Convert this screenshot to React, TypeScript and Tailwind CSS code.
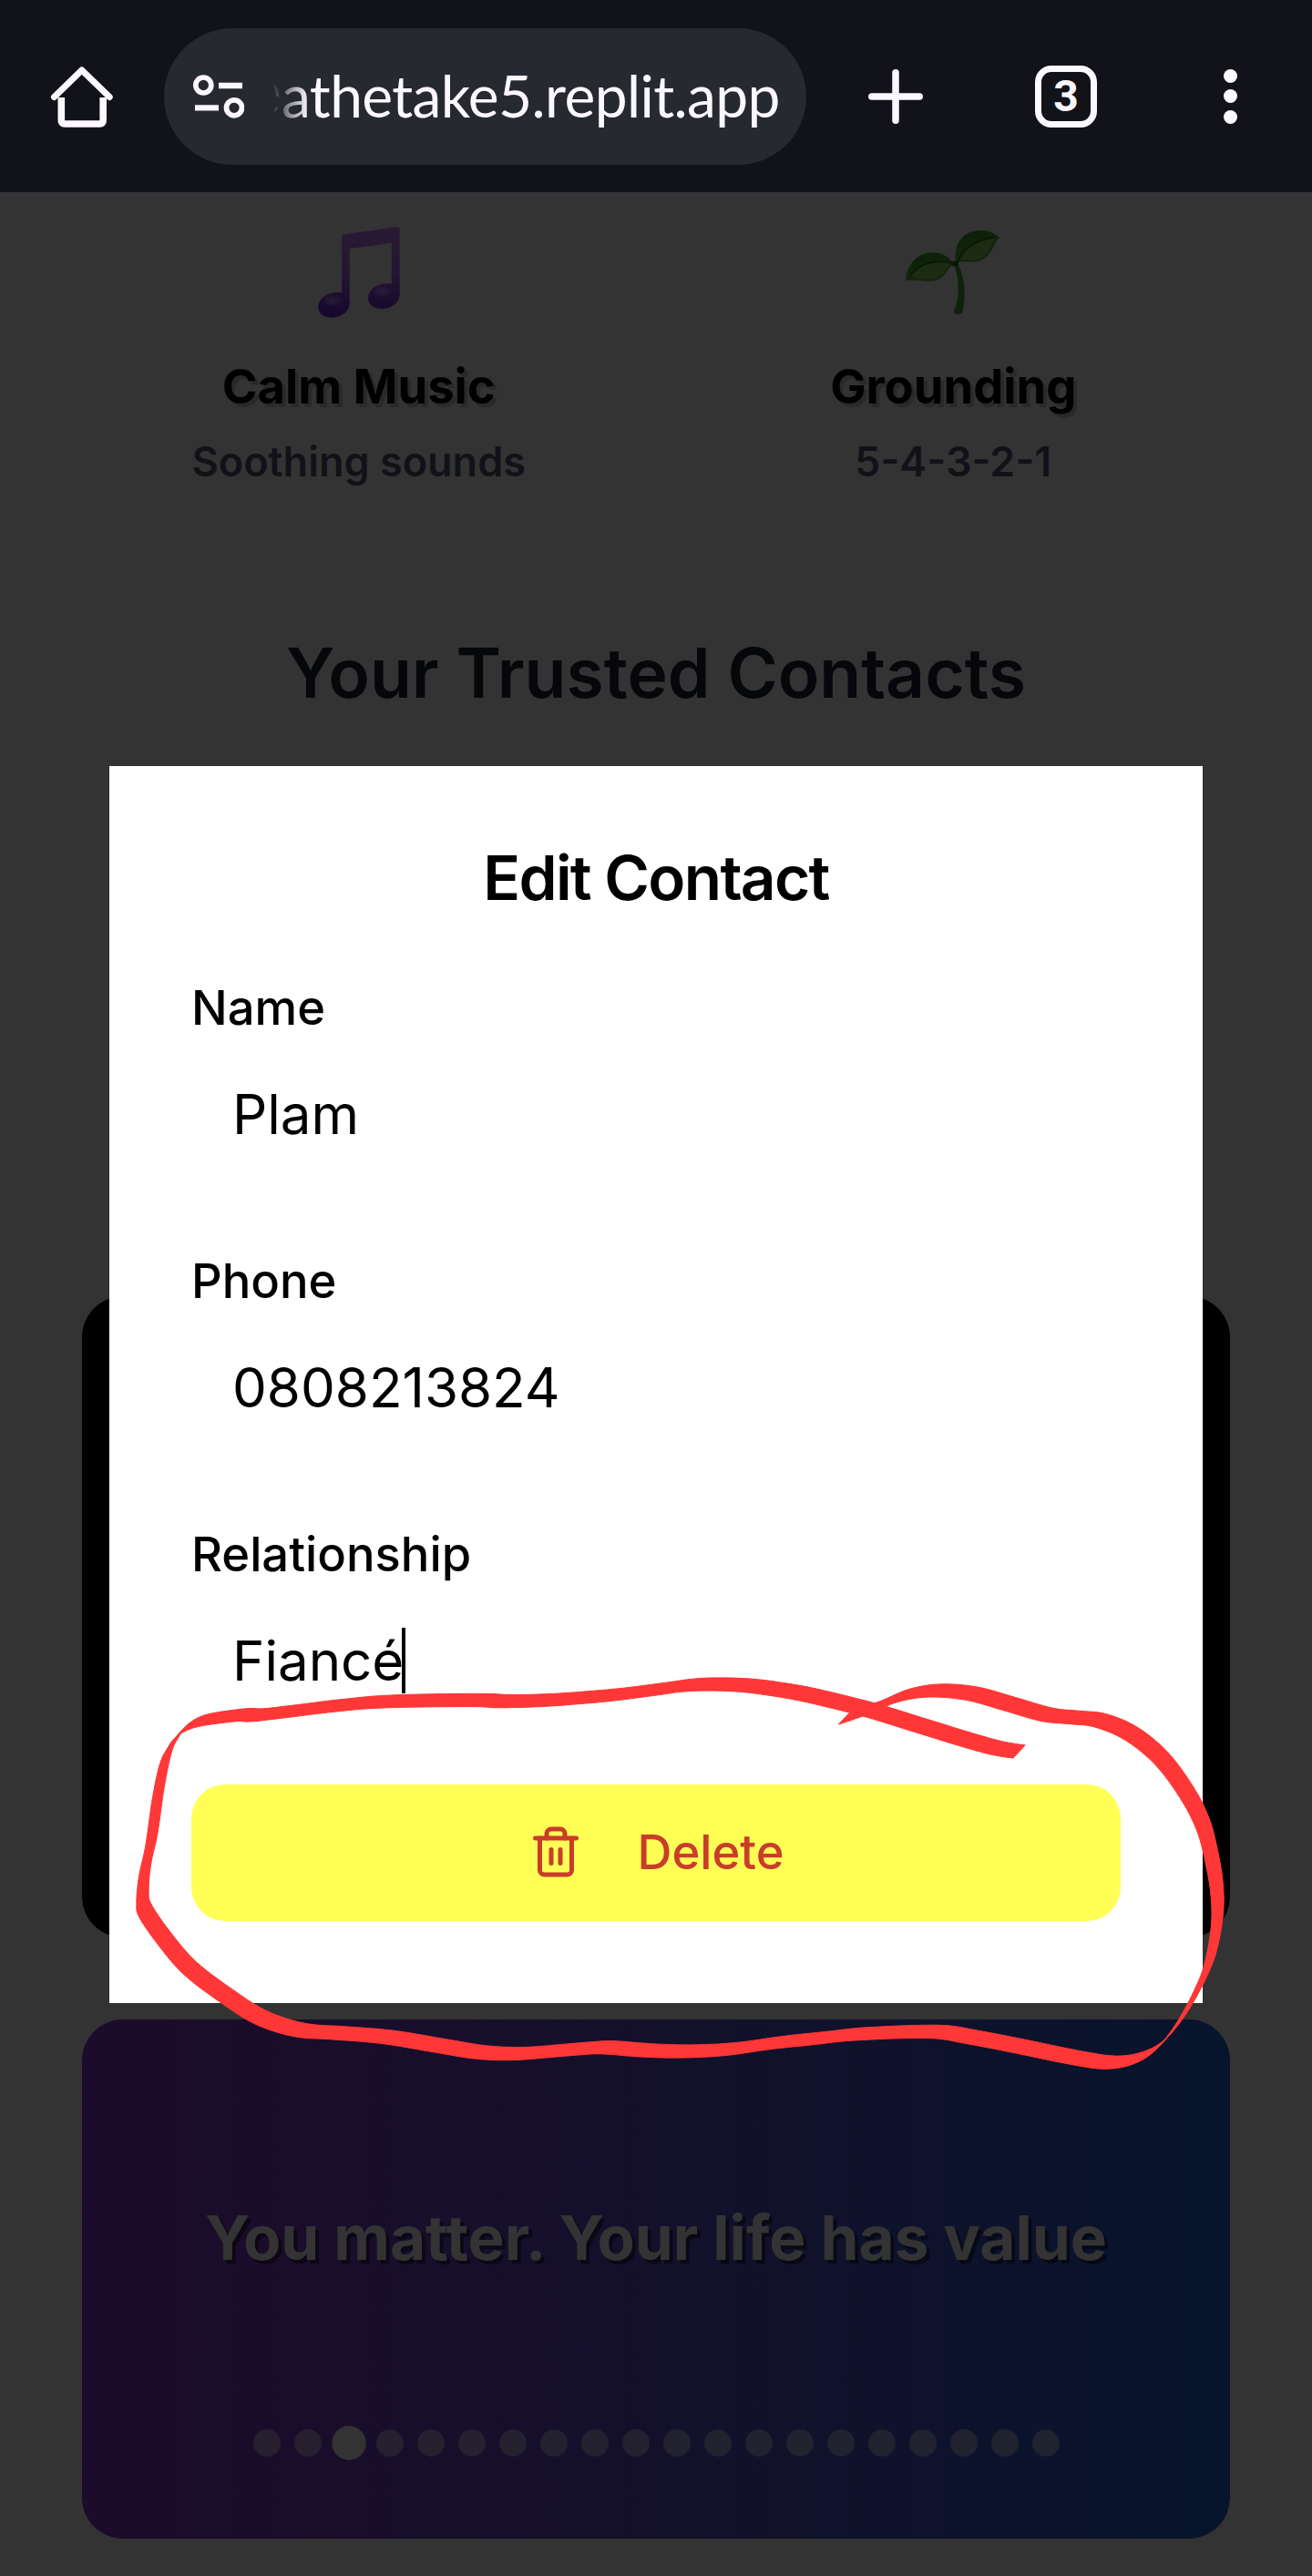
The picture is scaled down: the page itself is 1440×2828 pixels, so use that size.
import type { ReactNode } from "react";

type Point = [number, number];

const INK = "#fcf8ff";

/* ---------- browser bar ---------- */

function BarIcon({ children, className }: { children: ReactNode; className: string }) {
  return (
    <svg viewBox="0 0 90 90" fill="none" stroke={INK} className={`size-[90px] shrink-0 ${className}`}>
      {children}
    </svg>
  );
}

function BrowserBar() {
  return (
    <header className="flex h-[211px] items-center bg-[#121318]">
      <BarIcon className="ml-[45px]">
        <path d="M22.300 46V71.200a3.500 3.500 0 0 0 3.500 3.800H64.700a3.500 3.500 0 0 0 3.500-3.800V46" strokeWidth="7.600" />
        <path d="M14.500 45.500L44.800 16L75.200 45.500" strokeWidth="7" strokeLinecap="round" strokeLinejoin="round" />
      </BarIcon>

      <div className="ml-[45px] flex h-[150px] w-[705px] items-center rounded-full bg-[#272931]">
        <svg viewBox="0 0 56 48" fill="none" stroke={INK} strokeWidth="5.700" className="ml-8 h-12 w-14 shrink-0">
          <circle cx="11.300" cy="11.500" r="8.500" />
          <path d="M28 12H54M2 36.300H28" strokeWidth="6.300" />
          <circle cx="45" cy="36.300" r="8.500" />
        </svg>
        <div className="ml-8 flex w-[580px] items-center [mask-image:linear-gradient(to_right,rgba(0,0,0,0.05)_0px,rgba(0,0,0,0.35)_12px,black_38px)]">
          <svg viewBox="0 0 6 34" fill="none" stroke={INK} strokeWidth="3" className="mr-[3px] mt-1 h-[34px] w-[6px] shrink-0">
            <path d="M1 3Q4.500 8 4.500 15M1 31L4 27" />
          </svg>
          <span className="-mt-[2px] whitespace-nowrap font-['Lato',sans-serif] text-[64px] leading-[80px] tracking-[-0.6px] text-[#fcf8ff]">
            athetake5.replit.app
          </span>
        </div>
      </div>

      <BarIcon className="ml-[53px]">
        <path d="M45 18.800V71.200M18.800 45H71.200" strokeWidth="7.500" strokeLinecap="round" />
      </BarIcon>

      <div className="ml-[97px] flex size-[90px] items-center justify-center">
        <div className="flex size-[68px] items-center justify-center rounded-[18px] border-[7.5px] border-[#fcf8ff]">
          <span className="font-['Roboto',sans-serif] text-[48px] font-bold leading-none text-[#fcf8ff]">3</span>
        </div>
      </div>

      <div className="ml-[90px] flex w-[90px] flex-col items-center gap-[7.5px]">
        <i className="size-[15px] rounded-full bg-[#fcf8ff]" />
        <i className="size-[15px] rounded-full bg-[#fcf8ff]" />
        <i className="size-[15px] rounded-full bg-[#fcf8ff]" />
      </div>
    </header>
  );
}

/* ---------- dimmed page ---------- */

function MusicNote() {
  return (
    <svg viewBox="490 86 262 300" preserveAspectRatio="none" className="mt-[34px] h-[100px] w-[90px]">
      <defs>
        <linearGradient id="note" gradientUnits="userSpaceOnUse" x1="0" y1="86" x2="0" y2="386">
          <stop offset="0" stopColor="#291a34" />
          <stop offset="0.5" stopColor="#241533" />
          <stop offset="1" stopColor="#14072b" />
        </linearGradient>
        <radialGradient id="noteShine">
          <stop offset="0" stopColor="#2b1e3a" stopOpacity="0.9" />
          <stop offset="1" stopColor="#2b1e3a" stopOpacity="0" />
        </radialGradient>
      </defs>
      <g fill="url(#note)">
        <path d="M566 119Q566 112 573 111L740 87Q751 85 751 95V314H725V139L591 158V344H566Z" />
        <path d="M566 303C520 298 491 322 491 350C491 372 510 385 534 385C565 385 591 366 591 335L566 300Z" />
        <path d="M725 274C680 268 650 293 650 320C650 342 668 356 694 356C727 356 751 336 751 306L725 272Z" />
      </g>
      <ellipse cx="536" cy="330" rx="34" ry="20" fill="url(#noteShine)" />
      <ellipse cx="696" cy="300" rx="34" ry="20" fill="url(#noteShine)" />
    </svg>
  );
}

function Seedling() {
  return (
    <svg viewBox="405 98 312 277" className="mt-[38px] h-[92px] w-[104px]">
      <defs>
        <linearGradient id="leaf" x1="0" y1="0" x2="0.4" y2="1">
          <stop offset="0" stopColor="#0a1f09" />
          <stop offset="1" stopColor="#16260d" />
        </linearGradient>
      </defs>
      <path d="M564 208C578 250 588 312 564 364Q562 374 577 375Q591 375 593 366C603 312 603 262 577 208Z" fill="#0f210c" />
      <path d="M569 208C562 128 604 98 652 98C686 98 700 110 716 122C690 138 694 200 624 203C604 203 588 196 569 208Z" fill="url(#leaf)" />
      <path d="M566 208C545 184 526 171 495 171C443 171 404 214 406 266C424 258 440 266 482 266C540 266 536 222 566 208Z" fill="url(#leaf)" />
      <path d="M584 196C600 158 650 128 704 124C684 142 680 192 628 196C608 198 596 194 584 196Z" fill="#1d2b12" />
      <path d="M422 250C446 212 500 196 556 208C532 222 528 256 482 260C454 261 436 254 422 250Z" fill="#1d2b12" />
      <path d="M576 204C590 156 640 124 702 120M560 206C500 192 448 206 420 248" fill="none" stroke="#081a07" strokeWidth="5" />
      <circle cx="568" cy="208" r="10" fill="#071607" />
    </svg>
  );
}

function Feature({ icon, title, caption }: { icon: ReactNode; title: string; caption: string }) {
  return (
    <div className="flex flex-col items-center">
      <div className="h-[172px]">{icon}</div>
      <h3 className="text-[52.5px] font-bold leading-[75px] text-black [text-shadow:3.75px_3.75px_0_#292929]">{title}</h3>
      <p className="mt-[15px] text-[45px] font-semibold leading-[60px] text-[#111217]">{caption}</p>
    </div>
  );
}

function AffirmationCard() {
  return (
    <section className="mx-[90px] mt-[90px] flex h-[570px] flex-col items-center rounded-[45px] bg-linear-to-r from-[#1c0b2b] to-[#07142c] pt-[187px]">
      <p className="whitespace-nowrap text-[67.5px] font-bold leading-[105px] text-[#333333] [text-shadow:3.75px_3.75px_0_rgba(0,0,0,0.5)]">
        You matter. Your life has value
      </p>
      <div className="mt-[158px] flex gap-[15px]">
        {Array.from({ length: 20 }, (_, i) => (
          <i
            key={i}
            className={i === 2 ? "size-[30px] scale-125 rounded-full bg-[#333333]" : "size-[30px] rounded-full bg-[#333333]/50"}
          />
        ))}
      </div>
    </section>
  );
}

/* ---------- dialog ---------- */

function Field({ label, value, focused = false }: { label: string; value: string; focused?: boolean }) {
  return (
    <div className="h-[300px]">
      <div className="text-[52.5px] font-medium leading-[75px]">{label}</div>
      <div className="mt-[34px] flex h-[90px] items-center pl-[45px] text-[60px] leading-[90px]">
        {value}
        {focused && <span className="-ml-[2px] h-[72px] w-1 bg-black" />}
      </div>
    </div>
  );
}

function TrashIcon() {
  return (
    <svg viewBox="0 0 24 24" fill="none" stroke="currentColor" strokeWidth="2" strokeLinecap="round" strokeLinejoin="round" className="-mt-[2px] size-[60px]">
      <path d="M3 6h18" />
      <path d="M19 6v14a2 2 0 0 1-2 2H7a2 2 0 0 1-2-2V6" />
      <path d="M8 6V4a2 2 0 0 1 2-2h4a2 2 0 0 1 2 2v2" />
      <path d="M10 11v6M14 11v6" />
    </svg>
  );
}

function EditDialog() {
  return (
    <div className="absolute left-[120px] top-[841px] h-[1358px] w-[1200px] bg-white px-[90px] pt-[89px] text-black">
      <h2 className="text-center text-[67.5px] font-semibold leading-[68px] tracking-tight">Edit Contact</h2>
      <div className="mt-[71px] h-[890px]">
        <Field label="Name" value="Plam" />
        <Field label="Phone" value="0808213824" />
        <Field label="Relationship" value="Fiancé" focused />
      </div>
      <button className="flex h-[150px] w-full items-center justify-center gap-[60px] rounded-[37.5px] bg-[#ffff55] text-[52.5px] font-medium leading-[75px] text-[#c93d2b]">
        <TrashIcon />
        <span className="-mt-px">Delete</span>
      </button>
    </div>
  );
}

/* ---------- hand-drawn marker loop ---------- */

const LOOP: Point[] = [
  [1118.6, 1923], [1094, 1919], [1059.7, 1909.5], [1004.6, 1892.5], [955.7, 1877.5], [900, 1863.5],
  [866.7, 1856.7], [826.7, 1851], [790, 1849], [756.7, 1850], [726.7, 1854], [680, 1860], [640, 1863.7],
  [600, 1866.5], [554.5, 1867.7], [520, 1866.4], [424.4, 1868], [370, 1872.5], [325, 1878], [283, 1882.8],
  [263.7, 1882.8], [221.6, 1889], [201, 1899], [190, 1913], [181.8, 1930.4], [173.8, 1968], [166.5, 2018.8],
  [159.2, 2052.5], [156.5, 2082], [160, 2098.7], [183.3, 2132], [210, 2162], [248.4, 2191], [286.7, 2215],
  [328.8, 2228.5], [370.9, 2231.8], [424.4, 2236.2], [481.8, 2245.6], [527.8, 2253], [569.9, 2254.5],
  [615.8, 2251], [640, 2249], [666.7, 2247.7], [706.7, 2250.7], [750, 2252], [800, 2249.7], [853, 2242.5],
  [900, 2237.5], [946, 2232.8], [1025, 2230.4], [1066.6, 2236.3], [1125, 2247.6], [1176.8, 2258.3],
  [1218, 2264.2], [1249, 2259.3], [1273.2, 2245], [1295.6, 2217.3], [1316, 2181], [1328.7, 2148.5],
  [1336, 2107], [1335.5, 2072.7], [1329.7, 2038], [1320.7, 2003.8], [1303.5, 1969.4], [1275.3, 1931],
  [1242, 1903.5], [1207.8, 1888.8], [1180, 1885.5], [1149, 1882.3], [1108, 1870.6], [1066.6, 1859.2],
  [1025.3, 1856], [991, 1861.6], [960, 1874.5], [927, 1886],
];

/** Samples a Catmull-Rom spline through the points. */
function spline(points: Point[], steps: number): Point[] {
  const out: Point[] = [];
  for (let i = 0; i < points.length - 1; i++) {
    const p0 = points[Math.max(0, i - 1)];
    const p1 = points[i];
    const p2 = points[i + 1];
    const p3 = points[Math.min(points.length - 1, i + 2)];
    for (let s = 0; s < steps; s++) {
      const t = s / steps;
      const at = (k: 0 | 1) =>
        0.5 *
        (2 * p1[k] +
          (p2[k] - p0[k]) * t +
          (2 * p0[k] - 5 * p1[k] + 4 * p2[k] - p3[k]) * t * t +
          (3 * p1[k] - p0[k] - 3 * p2[k] + p3[k]) * t * t * t);
      out.push([at(0), at(1)]);
    }
  }
  out.push(points[points.length - 1]);
  return out;
}

/** Sweeps a slanted flat nib along the line, one quad for each step. */
function nibStroke(points: Point[], dx: number, dy: number): string {
  let d = "";
  for (let i = 0; i < points.length - 1; i++) {
    const [ax, ay] = points[i];
    const [bx, by] = points[i + 1];
    const quad: Point[] = [[ax + dx, ay + dy], [bx + dx, by + dy], [bx - dx, by - dy], [ax - dx, ay - dy]];
    if ((bx - ax) * dy - (by - ay) * dx < 0) quad.reverse();
    d += `M${quad.map(([x, y]) => `${x.toFixed(1)} ${y.toFixed(1)}`).join("L")}Z`;
  }
  return d;
}

const LOOP_PATH = nibStroke(spline(LOOP, 6), 6.6, -7.1);

function MarkerLoop() {
  return (
    <svg viewBox="0 1800 1440 520" className="pointer-events-none absolute left-0 top-[1800px] h-[520px] w-[1440px]">
      <path d={LOOP_PATH} fill="#ff3737" stroke="#ff3737" strokeWidth="1" strokeLinejoin="round" />
    </svg>
  );
}

export default function App() {
  return (
    <div className="relative h-[2828px] w-[1440px] overflow-hidden bg-[#333333] font-['Inter',sans-serif]">
      <BrowserBar />
      <main className="border-t-4 border-[#363539]">
        <div className="grid h-[471px] grid-cols-2 gap-[45px] px-[90px]">
          <Feature icon={<MusicNote />} title="Calm Music" caption="Soothing sounds" />
          <Feature icon={<Seedling />} title="Grounding" caption="5-4-3-2-1" />
        </div>
        <h2 className="text-center text-[75px] font-semibold leading-[105px] text-[#05070b]">Your Trusted Contacts</h2>
        <section className="mx-[90px] mt-[632px] h-[704px] rounded-[45px] bg-black" />
        <AffirmationCard />
      </main>
      <EditDialog />
      <MarkerLoop />
    </div>
  );
}
